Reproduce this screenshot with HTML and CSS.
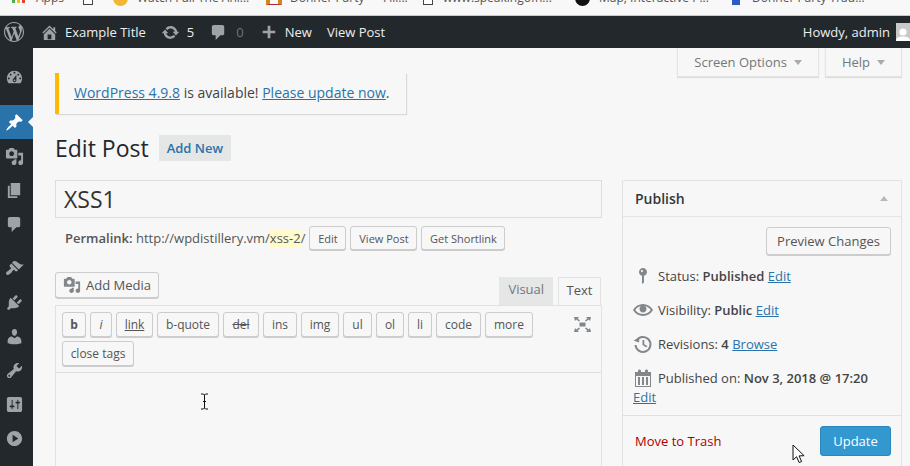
FILE: index.html
```html
<!DOCTYPE html>
<html>
    <head>
        <title>Edit Post</title>
        <link rel="stylesheet" href="styles.css">
    </head>
    <body>
        <nav class="bookmarks">
            <span class="bm bm-apps"><svg class="bm-icon" width="13" height="4" viewBox="0 0 13 4"><rect x="0" width="3" height="3" fill="#4caf50"/><rect x="5" width="3" height="3" fill="#f4c20d"/><rect x="10" width="3" height="3" fill="#db4437"/></svg>Apps</span>
            <span class="bm bm-doc"><i class="bm-square"></i></span>
            <span class="bm bm-watch"><i class="bm-dot orange"></i>Watch Full The Ani...</span>
            <span class="bm bm-donner"><i class="bm-m"></i>Donner Party</span>
            <span class="bm bm-fill">Fill...</span>
            <span class="bm bm-www"><i class="bm-square"></i>www.speakingofh...</span>
            <span class="bm bm-map"><i class="bm-dot black"></i>Map, Interactive P...</span>
            <span class="bm bm-trail"><i class="bm-shield"></i>Donner Party Trad...</span>
        </nav>

        <header class="adminbar">
            <svg class="wp-logo" width="20" height="20" viewBox="0 0 20 20"><path d="M20 10c0-5.51-4.49-10-10-10C4.48 0 0 4.49 0 10c0 5.52 4.48 10 10 10 5.51 0 10-4.48 10-10zM7.78 15.37L4.37 6.22c.55-.02 1.17-.08 1.17-.08.5-.06.44-1.13-.06-1.11 0 0-1.45.11-2.37.11-.18 0-.37 0-.58-.01C4.12 2.69 6.87 1.11 10 1.11c2.33 0 4.45.87 6.05 2.34-.68-.11-1.65.39-1.65 1.58 0 .74.45 1.36.9 2.1.35.61.55 1.36.55 2.46 0 1.49-1.4 5-1.4 5l-3.03-8.37c.54-.02.82-.17.82-.17.5-.05.44-1.25-.06-1.22 0 0-1.44.12-2.38.12-.87 0-2.33-.12-2.33-.12-.5-.03-.56 1.2-.06 1.22l.92.08 1.26 3.41zM17.41 10c.24-.64.74-1.87.43-4.25.7 1.29 1.05 2.71 1.05 4.25 0 3.29-1.73 6.24-4.4 7.78.97-2.59 1.94-5.2 2.92-7.78zM6.1 18.09C3.12 16.65 1.11 13.53 1.11 10c0-1.3.23-2.48.72-3.59C3.25 10.3 4.67 14.2 6.1 18.09zm4.03-6.63l2.58 6.98c-.86.29-1.76.45-2.71.45-.79 0-1.57-.11-2.29-.33.81-2.38 1.62-4.74 2.42-7.1z"/></svg>
            <span class="ab-item ab-site"><svg width="19" height="19" viewBox="0 0 20 20"><path d="M16 8.5l1.53 1.53-1.06 1.06L10 4.62l-6.47 6.47-1.06-1.06L10 2.5l4 4v-2h2v4zm-6-2.46l6 5.99V18H4v-5.97zM12 17v-5H8v5h4z"/></svg>Example Title</span>
            <span class="ab-item ab-updates"><svg width="19" height="19" viewBox="0 0 20 20"><path d="M10.2 3.28c3.53 0 6.43 2.61 6.92 6h2.08l-3.5 4-3.5-4h2.32c-.45-1.97-2.21-3.45-4.32-3.45-1.45 0-2.73.71-3.54 1.78L4.95 5.66C6.23 4.2 8.11 3.28 10.2 3.28zm-.4 13.44c-3.52 0-6.43-2.61-6.92-6H.8l3.5-4c1.17 1.33 2.33 2.67 3.5 4H5.48c.45 1.97 2.21 3.45 4.32 3.45 1.45 0 2.73-.71 3.54-1.78l1.71 1.95c-1.28 1.46-3.15 2.38-5.25 2.38z"/></svg>5</span>
            <span class="ab-item ab-comments"><svg width="19" height="19" viewBox="0 0 20 20"><path d="M5 2h9c1.1 0 2 .9 2 2v7c0 1.1-.9 2-2 2h-2l-5 5v-5H5c-1.1 0-2-.9-2-2V4c0-1.1.9-2 2-2z"/></svg><span class="muted">0</span></span>
            <span class="ab-item ab-new"><svg width="18" height="18" viewBox="0 0 20 20"><path d="M17 8.5v3h-5.5V17h-3v-5.5H3v-3h5.5V3h3v5.5H17z"/></svg>New</span>
            <span class="ab-item ab-view">View Post</span>
            <span class="ab-item ab-howdy">Howdy, admin<span class="avatar"><svg width="14" height="14" viewBox="0 0 14 14"><circle cx="7" cy="5" r="3.6"/><path d="M0 14c0-3.5 3-4.5 7-4.5s7 1 7 4.5z"/></svg></span></span>
        </header>

        <div class="layout">
            <aside class="sidemenu">
                <div class="mi mi-first"><svg viewBox="0 0 20 20"><path d="M3.76 16h12.48c1.1-1.37 1.76-3.11 1.76-5 0-4.42-3.58-8-8-8s-8 3.58-8 8c0 1.89.66 3.63 1.76 5zM10 4c.55 0 1 .45 1 1s-.45 1-1 1-1-.45-1-1 .45-1 1-1zM6 6c.55 0 1 .45 1 1s-.45 1-1 1-1-.45-1-1 .45-1 1-1zm8 0c.55 0 1 .45 1 1s-.45 1-1 1-1-.45-1-1 .45-1 1-1zm-5.37 5.55L12 7v6c0 1.1-.9 2-2 2s-2-.9-2-2c0-.57.24-1.08.63-1.45zM4 10c.55 0 1 .45 1 1s-.45 1-1 1-1-.45-1-1 .45-1 1-1zm12 0c.55 0 1 .45 1 1s-.45 1-1 1-1-.45-1-1 .45-1 1-1zm-5 3c0-.55-.45-1-1-1s-1 .45-1 1 .45 1 1 1 1-.45 1-1z"/></svg></div>
                <div class="mi mi-current"><svg viewBox="0 0 20 20"><path d="M10.44 3.02l1.82-1.82 6.36 6.35-1.83 1.82c-1.05-.68-2.48-.57-3.41.36l-.75.75c-.92.93-1.04 2.35-.35 3.41l-1.83 1.82-2.41-2.41-2.8 2.79c-.42.42-3.38 2.71-3.8 2.29s1.86-3.39 2.28-3.81l2.79-2.79L4.1 9.36l1.83-1.82c1.05.69 2.48.57 3.4-.36l.75-.75c.93-.92 1.05-2.35.36-3.41z"/></svg></div>
                <div class="mi"><svg viewBox="0 0 20 20"><path d="M13 11V4c0-.55-.45-1-1-1h-1.67L9 1H5L3.67 3H2c-.55 0-1 .45-1 1v7c0 .55.45 1 1 1h10c.55 0 1-.45 1-1zM7 4.5c1.38 0 2.5 1.12 2.5 2.5S8.38 9.5 7 9.5 4.5 8.38 4.5 7 5.62 4.5 7 4.5zM14 6h5v10.5c0 1.38-1.12 2.5-2.5 2.5S14 17.88 14 16.5s1.12-2.5 2.5-2.5c.17 0 .34.02.5.05V9h-3V6zm-4 8.05V13h2v3.5c0 1.38-1.12 2.5-2.5 2.5S7 17.88 7 16.5 8.12 14 9.5 14c.17 0 .34.02.5.05z"/></svg></div>
                <div class="mi"><svg viewBox="0 0 20 20"><path d="M6 15V2h10v13H6zm-1 1h8v2H3V5h2v11z"/></svg></div>
                <div class="mi"><svg viewBox="0 0 20 20"><path d="M5 2h9c1.1 0 2 .9 2 2v7c0 1.1-.9 2-2 2h-2l-5 5v-5H5c-1.1 0-2-.9-2-2V4c0-1.1.9-2 2-2z"/></svg></div>
                <div class="mi mi-sep"><svg viewBox="0 0 20 20"><path d="M14.48 11.06L7.41 3.99l1.5-1.5c.5-.56 2.3-.47 3.51.32 1.21.8 1.43 1.28 2.91 2.1 1.18.64 2.45 1.26 4.45.85zm-.71.71L6.7 4.7 4.93 6.47c-.39.39-.39 1.02 0 1.41l1.06 1.06c.39.39.39 1.03 0 1.42-.6.6-1.43 1.11-2.21 1.69-.35.26-.7.53-1.01.84C1.43 13.23.4 14.89 1.7 16.2c1.3 1.3 2.97.27 4.31-1.07.31-.31.58-.66.84-1.01.58-.78 1.09-1.61 1.69-2.21.39-.39 1.03-.39 1.42 0l1.06 1.06c.39.39 1.02.39 1.41 0z"/></svg></div>
                <div class="mi"><svg viewBox="0 0 20 20"><path d="M13.11 4.36L9.87 7.6 8 5.73l3.24-3.24c.35-.34 1.05-.2 1.56.32.52.51.66 1.21.31 1.55zm-8 1.77l.91-1.12 9.01 9.01-1.19.84c-.71.71-2.63 1.16-3.82 1.16H6.14L4.9 17.26c-.59.59-1.54.59-2.12 0-.59-.58-.59-1.53 0-2.12l1.24-1.24v-3.88c0-1.13.4-3.19 1.09-3.89zm7.26 3.97l3.24-3.24c.34-.35 1.04-.21 1.55.31.52.51.66 1.21.31 1.55l-3.24 3.25z"/></svg></div>
                <div class="mi"><svg viewBox="0 0 20 20"><path d="M10 9.25c-2.27 0-2.73-3.44-2.73-3.44C7 4.02 7.82 2 9.97 2c2.16 0 2.98 2.02 2.71 3.81 0 0-.41 3.44-2.68 3.44zm0 2.57L12.72 10c2.39 0 4.52 2.33 4.52 4.53v2.49s-3.65 1.13-7.24 1.13c-3.65 0-7.24-1.13-7.24-1.13v-2.49c0-2.25 1.94-4.48 4.47-4.48z"/></svg></div>
                <div class="mi"><svg viewBox="0 0 20 20"><path d="M16.68 9.77c-1.34 1.34-3.3 1.67-4.95.99l-5.41 6.52c-.99.99-2.59.99-3.58 0s-.99-2.59 0-3.57l6.52-5.42c-.68-1.65-.35-3.61.99-4.95 1.28-1.28 3.12-1.62 4.72-1.06l-2.89 2.89 2.82 2.82 2.86-2.87c.53 1.58.18 3.39-1.08 4.65zM3.81 16.21c.4.39 1.04.39 1.43 0 .4-.4.4-1.04 0-1.43-.39-.4-1.03-.4-1.43 0-.39.39-.39 1.03 0 1.43z"/></svg></div>
                <div class="mi"><svg viewBox="0 0 20 20"><path d="M18 16V4c0-1.1-.9-2-2-2H4c-1.1 0-2 .9-2 2v12c0 1.1.9 2 2 2h12c1.1 0 2-.9 2-2zM8 11h1c.55 0 1 .45 1 1s-.45 1-1 1H8v1.5c0 .28-.22.5-.5.5s-.5-.22-.5-.5V13H6c-.55 0-1-.45-1-1s.45-1 1-1h1V5.5c0-.28.22-.5.5-.5s.5.22.5.5V11zm5-2h-1c-.55 0-1-.45-1-1s.45-1 1-1h1V5.5c0-.28.22-.5.5-.5s.5.22.5.5V7h1c.55 0 1 .45 1 1s-.45 1-1 1h-1v5.5c0 .28-.22.5-.5.5s-.5-.22-.5-.5V9z"/></svg></div>
                <div class="mi"><svg viewBox="0 0 20 20"><path d="M10 2c4.42 0 8 3.58 8 8s-3.58 8-8 8-8-3.58-8-8 3.58-8 8-8zm-2 12l6-4-6-4v8z"/></svg></div>
            </aside>

            <main class="content">
                <div class="screen-meta">
                    <button class="meta-tab">Screen Options<i class="caret"></i></button>
                    <button class="meta-tab">Help<i class="caret"></i></button>
                </div>

                <div class="notice"><a href="#">WordPress 4.9.8</a> is available! <a href="#">Please update now</a>.</div>

                <div class="page-head">
                    <h1>Edit Post</h1>
                    <a class="add-new">Add New</a>
                </div>

                <div class="columns">
                    <div class="col-main">
                        <div class="title-input">XSS1</div>
                        <div class="permalink">
                            <span><strong>Permalink:</strong> http://wpdistillery.vm/<span class="slug">xss-2</span>/</span>
                            <button class="btn btn-small btn-edit">Edit</button>
                            <button class="btn btn-small btn-view">View Post</button>
                            <button class="btn btn-small btn-short">Get Shortlink</button>
                        </div>

                        <div class="editor-tools">
                            <button class="btn btn-media"><svg width="18" height="18" viewBox="0 0 20 20"><path d="M13 11V4c0-.55-.45-1-1-1h-1.67L9 1H5L3.67 3H2c-.55 0-1 .45-1 1v7c0 .55.45 1 1 1h10c.55 0 1-.45 1-1zM7 4.5c1.38 0 2.5 1.12 2.5 2.5S8.38 9.5 7 9.5 4.5 8.38 4.5 7 5.62 4.5 7 4.5zM14 6h5v10.5c0 1.38-1.12 2.5-2.5 2.5S14 17.88 14 16.5s1.12-2.5 2.5-2.5c.17 0 .34.02.5.05V9h-3V6zm-4 8.05V13h2v3.5c0 1.38-1.12 2.5-2.5 2.5S7 17.88 7 16.5 8.12 14 9.5 14c.17 0 .34.02.5.05z"/></svg>Add Media</button>
                            <div class="tabs">
                                <span class="tab">Visual</span>
                                <span class="tab tab-active">Text</span>
                            </div>
                        </div>

                        <div class="editor">
                            <div class="toolbar">
                                <div class="qt-buttons">
                                    <button class="btn qt qt-b"><b>b</b></button>
                                    <button class="btn qt qt-i"><i>i</i></button>
                                    <button class="btn qt qt-link"><u>link</u></button>
                                    <button class="btn qt qt-quote">b-quote</button>
                                    <button class="btn qt qt-del"><s>del</s></button>
                                    <button class="btn qt qt-ins">ins</button>
                                    <button class="btn qt qt-img">img</button>
                                    <button class="btn qt qt-ul">ul</button>
                                    <button class="btn qt qt-ol">ol</button>
                                    <button class="btn qt qt-li">li</button>
                                    <button class="btn qt qt-code">code</button>
                                    <button class="btn qt qt-more">more</button>
                                    <button class="btn qt qt-close">close tags</button>
                                </div>
                                <svg class="fullscreen" width="17" height="15" viewBox="0 0 17 15"><path d="M0 0h5L3.6 1.5 6 3.4 5 4.4 2.3 2.5 1 4zM17 0h-5l1.400 1.500L11 3.400l1 1 2.700-1.900L16 4zM0 15h5l-1.400-1.500L6 11.600l-1-1-2.700 1.900L1 11zM17 15h-5l1.400-1.500-2.400-1.900 1-1 2.700 1.900L16 11zM5.500 5.500h6v4h-6z"/></svg>
                            </div>
                        </div>
                    </div>

                    <aside class="publish">
                        <h2 class="publish-title">Publish<i class="caret-up"></i></h2>
                        <div class="publish-body">
                            <div class="preview-row"><button class="btn btn-preview">Preview Changes</button></div>
                            <div class="pub-row"><svg width="20" height="20" viewBox="0 0 20 20"><path d="M14 6c0 1.86-1.28 3.41-3 3.86V16c0 1-2 2-2 2V9.86c-1.72-.45-3-2-3-3.86 0-2.21 1.79-4 4-4s4 1.79 4 4zM8 5c0 .55.45 1 1 1s1-.45 1-1-.45-1-1-1-1 .45-1 1z"/></svg><span>Status: <b>Published</b> <a href="#">Edit</a></span></div>
                            <div class="pub-row"><svg width="20" height="20" viewBox="0 0 20 20"><path d="M19.7 9.4C17.7 6 14 3.9 10 3.9S2.3 6 .3 9.4L0 10l.3.6c2 3.4 5.7 5.5 9.7 5.5s7.7-2.1 9.7-5.5l.3-.6-.3-.6zM10 14.100c-3.100 0-6-1.600-7.700-4.100C3.600 8 5.700 6.600 8 6.100c-.9.6-1.500 1.700-1.500 2.900 0 1.900 1.600 3.500 3.500 3.500s3.500-1.600 3.500-3.500c0-1.200-.6-2.300-1.500-2.900 2.300.5 4.400 1.900 5.700 3.900-1.700 2.500-4.600 4.100-7.700 4.100z"/></svg><span>Visibility: <b>Public</b> <a href="#">Edit</a></span></div>
                            <div class="pub-row"><svg width="20" height="20" viewBox="0 0 20 20"><path d="M3.3 7A7.500 7.500 0 1 1 2.500 11" fill="none" stroke="currentColor" stroke-width="2"/><path d="M.5 6.500l5.500 2 .5-5zM9.500 6h1.800v4.200l3 1.800-.9 1.400-3.900-2.400z"/></svg><span>Revisions: <b>4</b> <a href="#">Browse</a></span></div>
                            <div class="pub-row pub-date"><svg width="20" height="20" viewBox="0 0 20 20"><path d="M15 4h3v15H2V4h3V3c0-.41.15-.76.44-1.06.29-.29.65-.44 1.06-.44s.77.15 1.06.44c.29.3.44.65.44 1.06v1h4V3c0-.41.15-.76.44-1.06.29-.29.65-.44 1.06-.44s.77.15 1.06.44c.29.3.44.65.44 1.06v1zM3 18h14V8H3zM5 9h2v8H5zM9 9h2v8H9zM13 9h2v8h-2z" fill-rule="evenodd"/></svg><span>Published on: <b>Nov 3, 2018 @ 17:20</b></span></div>
                            <a class="date-edit" href="#">Edit</a>
                        </div>
                        <div class="publish-actions">
                            <a class="trash">Move to Trash</a>
                            <button class="btn-update">Update</button>
                        </div>
                    </aside>
                </div>
            </main>
        </div>

        <!-- mouse pointers caught in the capture -->
        <svg class="cursor-text" width="9" height="17" viewBox="0 0 9 17"><path d="M1 1h2.500L4.500 2l1-1H8M4.500 2v13M1 16h2.500l1-1 1 1H8M3 8.500h3" fill="none" stroke="#111" stroke-width="1"/></svg>
        <svg class="cursor-arrow" width="14" height="20" viewBox="0 0 14 20"><path d="M1 1v15l3.600-3.300 2.500 5.800 2.500-1-2.500-5.600 5-.2z" fill="#fff" stroke="#111" stroke-width="1"/></svg>
    </body>
</html>
```

FILE: styles.css
```css
* {
    box-sizing: border-box;
}
body {
    margin: 0;
    height: 466px;
    overflow: hidden;
    background: #f7f7f7;
    color: #444;
    font-family: "Open Sans", sans-serif;
    font-size: 13px;
    position: relative;
}
a {
    color: #2a73aa;
    text-decoration: underline;
}
button {
    font-family: inherit;
    margin: 0;
}

/* browser bookmarks bar, cut off at the top */
.bookmarks {
    height: 16px;
    background: #f8f8f8;
    border-bottom: 1px solid #c9c9c9;
    display: flex;
    overflow: hidden;
    font-size: 12px;
    color: #555;
    line-height: 15px;
}
.bm {
    display: flex;
    flex: none;
    align-items: flex-start;
    margin-top: -10px;
    white-space: nowrap;
}
.bm-icon {
    margin: 10px 11px 0 0;
}
.bm-apps { width: 83px; padding-left: 12px; }
.bm-doc { width: 30px; }
.bm-watch { width: 153px; }
.bm-donner { width: 117px; }
.bm-fill { width: 40px; }
.bm-www { width: 152px; }
.bm-map { width: 157px; }
.bm-trail { width: auto; }
.bm-square {
    width: 10px;
    height: 15px;
    border: 1px solid #444;
    background: #fff;
    margin-right: 10px;
}
.bm-dot {
    width: 15px;
    height: 16px;
    border-radius: 50%;
    margin-right: 9px;
}
.orange { background: #f2b632; }
.black { background: #111; }
.bm-m {
    width: 16px;
    height: 15px;
    margin-right: 8px;
    border-left: 4px solid #cf8a1d;
    border-right: 4px solid #cf8a1d;
    border-bottom: 1px solid #b3262a;
}
.bm-shield {
    width: 8px;
    height: 15px;
    margin-right: 12px;
    background: #2a5cc4;
}

/* admin bar */
.adminbar {
    height: 32px;
    background: #23282d;
    color: #eee;
    display: flex;
    align-items: center;
    font-size: 13px;
    overflow: hidden;
}
.adminbar svg {
    fill: #9ea3a8;
    flex: none;
}
.wp-logo {
    margin: 0 8px 0 4px;
}
.ab-item {
    display: flex;
    align-items: center;
    white-space: nowrap;
}
.ab-site {
    margin-left: 8px;
}
.ab-site svg {
    margin-right: 6px;
}
.ab-updates {
    margin-left: 15px;
}
.ab-updates svg {
    margin-right: 7px;
}
.ab-comments {
    margin-left: 15px;
}
.ab-comments svg {
    margin-right: 8px;
}
.muted {
    color: #70757a;
}
.ab-new {
    margin-left: 16px;
}
.ab-new svg {
    margin-right: 7px;
}
.ab-view {
    margin-left: 15px;
}
.ab-howdy {
    margin-left: auto;
}
.avatar {
    width: 14px;
    height: 18px;
    background: #c9c9c9;
    margin-left: 6px;
    overflow: hidden;
    display: flex;
    align-items: flex-end;
}
.adminbar .avatar svg {
    fill: #fff;
}

.layout {
    display: flex;
    height: 418px;
}

/* left menu */
.sidemenu {
    width: 33px;
    flex: none;
    background: #23282d;
    padding-top: 12px;
}
.mi {
    height: 34px;
    display: flex;
    align-items: center;
    justify-content: center;
    padding-right: 5px;
    position: relative;
}
.mi svg {
    width: 19px;
    height: 19px;
    fill: #9ea3a8;
}
.mi-first {
    margin-bottom: 11px;
}
.mi-current {
    background: #2a73aa;
}
.mi-current svg {
    fill: #fff;
}
.mi-current::after {
    content: "";
    position: absolute;
    right: 0;
    top: 12px;
    border: 5px solid transparent;
    border-right-color: #f7f7f7;
    border-left-width: 0;
}
.mi-sep {
    margin-top: 10px;
}

/* main area */
.content {
    flex: 1;
    min-width: 0;
    padding: 0 8px 0 22px;
}
.screen-meta {
    display: flex;
    justify-content: flex-end;
    gap: 6px;
    height: 29px;
}
.meta-tab {
    height: 29px;
    padding: 0 16px;
    background: #f7f7f7;
    border: 1px solid #e4e4e4;
    border-top: 0;
    box-shadow: 0 1px 1px rgba(0,0,0,.1);
    color: #72777c;
    font-size: 13px;
}
.caret {
    display: inline-block;
    margin-left: 7px;
    vertical-align: 2px;
    border: 4px solid transparent;
    border-top: 5px solid #a8abae;
    border-bottom: 0;
}
.notice {
    width: 351px;
    height: 41px;
    margin-top: -4px;
    border-left: 4px solid #ffb900;
    padding: 0 0 0 15px;
    line-height: 40px;
    background: #f7f7f7;
    box-shadow: 1px 1px 1px rgba(0,0,0,.12);
    font-size: 14px;
}
.page-head {
    display: flex;
    align-items: center;
    margin-top: 21px;
    height: 26px;
}
h1 {
    margin: 0 10px 0 0;
    font-size: 23px;
    font-weight: 400;
    color: #23282d;
}
.add-new {
    height: 26px;
    padding: 0 8px;
    line-height: 26px;
    background: #e5e6e6;
    color: #2a73aa;
    font-weight: 600;
    font-size: 13px;
    text-decoration: none;
}
.columns {
    display: flex;
    gap: 20px;
    margin-top: 19px;
}
.col-main {
    width: 547px;
    flex: none;
}
.title-input {
    height: 38px;
    border: 1px solid #ddd;
    padding-left: 8px;
    font-size: 23px;
    line-height: 36px;
    color: #333;
}
.permalink {
    height: 24px;
    margin-top: 8px;
    padding-left: 10px;
    display: flex;
    align-items: center;
    gap: 4px;
    white-space: nowrap;
    color: #555;
    font-size: 13px;
}
.permalink strong {
    font-weight: 600;
}
.slug {
    background: #fffbcc;
}
.btn {
    background: #f7f7f7;
    border: 1px solid #ccc;
    border-radius: 3px;
    box-shadow: 0 1px 0 #ccc;
    color: #555;
    font-size: 12px;
    white-space: nowrap;
}
.btn-small {
    height: 24px;
    padding: 0;
    font-size: 11px;
}
.btn-edit { width: 37px; }
.btn-view { width: 67px; }
.btn-short { width: 84px; }
.editor-tools {
    display: flex;
    justify-content: space-between;
    align-items: flex-end;
    height: 33px;
    margin-top: 22px;
}
.btn-media {
    height: 26px;
    width: 104px;
    margin-bottom: 7px;
    display: flex;
    align-items: center;
    padding: 0 0 0 7px;
    font-size: 13px;
}
.btn-media svg {
    fill: #82878c;
    margin-right: 5px;
}
.tabs {
    display: flex;
    gap: 5px;
    padding-right: 1px;
}
.tab {
    height: 28px;
    line-height: 25px;
    padding: 0 9px;
    background: #e5e6e6;
    color: #72777c;
    font-size: 13px;
}
.tab-active {
    background: #f7f7f7;
    border: 1px solid #e2e2e2;
    border-bottom: 0;
    color: #555;
    padding: 0 7.5px;
}
.editor {
    border: 1px solid #e2e2e2;
    border-bottom: 0;
    height: 161px;
}
.toolbar {
    display: flex;
    justify-content: space-between;
    border-bottom: 1px solid #ddd;
    height: 67px;
    padding: 6px 10px 0 6px;
}
.qt-buttons {
    display: flex;
    flex-wrap: wrap;
    align-content: flex-start;
    gap: 4px;
    width: 480px;
}
.qt {
    height: 25px;
    padding: 0;
}
.qt-b { width: 24px; }
.qt-i { width: 22px; }
.qt-link { width: 37px; }
.qt-quote { width: 62px; }
.qt-del { width: 36px; }
.qt-ins { width: 34px; }
.qt-img { width: 38px; }
.qt-ul { width: 29px; }
.qt-ol { width: 28px; }
.qt-li { width: 24px; }
.qt-code { width: 45px; }
.qt-more { width: 48px; }
.qt-close { width: 72px; }
.fullscreen {
    fill: #82878c;
    margin-top: 5px;
}

/* publish box */
.publish {
    width: 280px;
    flex: none;
    height: 286px;
    border: 1px solid #e2e2e2;
    border-bottom: 0;
    border-radius: 2px 2px 0 0;
}
.publish-title {
    margin: 0;
    height: 36px;
    padding: 0 12px;
    display: flex;
    align-items: center;
    justify-content: space-between;
    border-bottom: 1px solid #e5e5e5;
    font-size: 14px;
    font-weight: 600;
    color: #32373c;
}
.caret-up {
    margin-right: 1px;
    border: 4px solid transparent;
    border-bottom: 5px solid #b4b9be;
    border-top: 0;
}
.publish-body {
    padding: 10px 10px 0 10px;
    height: 199px;
    border-bottom: 1px solid #e0e0e0;
}
.preview-row {
    display: flex;
    justify-content: flex-end;
}
.btn-preview {
    width: 125px;
    height: 28px;
    padding: 0;
    font-size: 13px;
}
.pub-row {
    display: flex;
    align-items: center;
    white-space: nowrap;
    height: 20px;
    margin-top: 14px;
    font-size: 13px;
}
.preview-row + .pub-row {
    margin-top: 11px;
}
.pub-row svg {
    fill: #82878c;
    color: #82878c;
    flex: none;
    margin-right: 5px;
}
.pub-row b {
    font-weight: 600;
}
.date-edit {
    font-size: 13px;
    display: block;
    line-height: 18px;
}
.publish-actions {
    display: flex;
    justify-content: space-between;
    align-items: center;
    padding: 10px 10px 0 12px;
}
.trash {
    color: #a00;
    font-size: 13px;
    text-decoration: none;
}
.btn-update {
    width: 71px;
    height: 30px;
    padding: 0;
    background: #3498d0;
    border: 1px solid #2a86bb;
    border-radius: 3px;
    color: #fff;
    font-size: 13px;
}

/* pointers over the page */
.cursor-text {
    position: absolute;
    left: 200px;
    top: 393px;
}
.cursor-arrow {
    position: absolute;
    left: 792px;
    top: 444px;
}
```
